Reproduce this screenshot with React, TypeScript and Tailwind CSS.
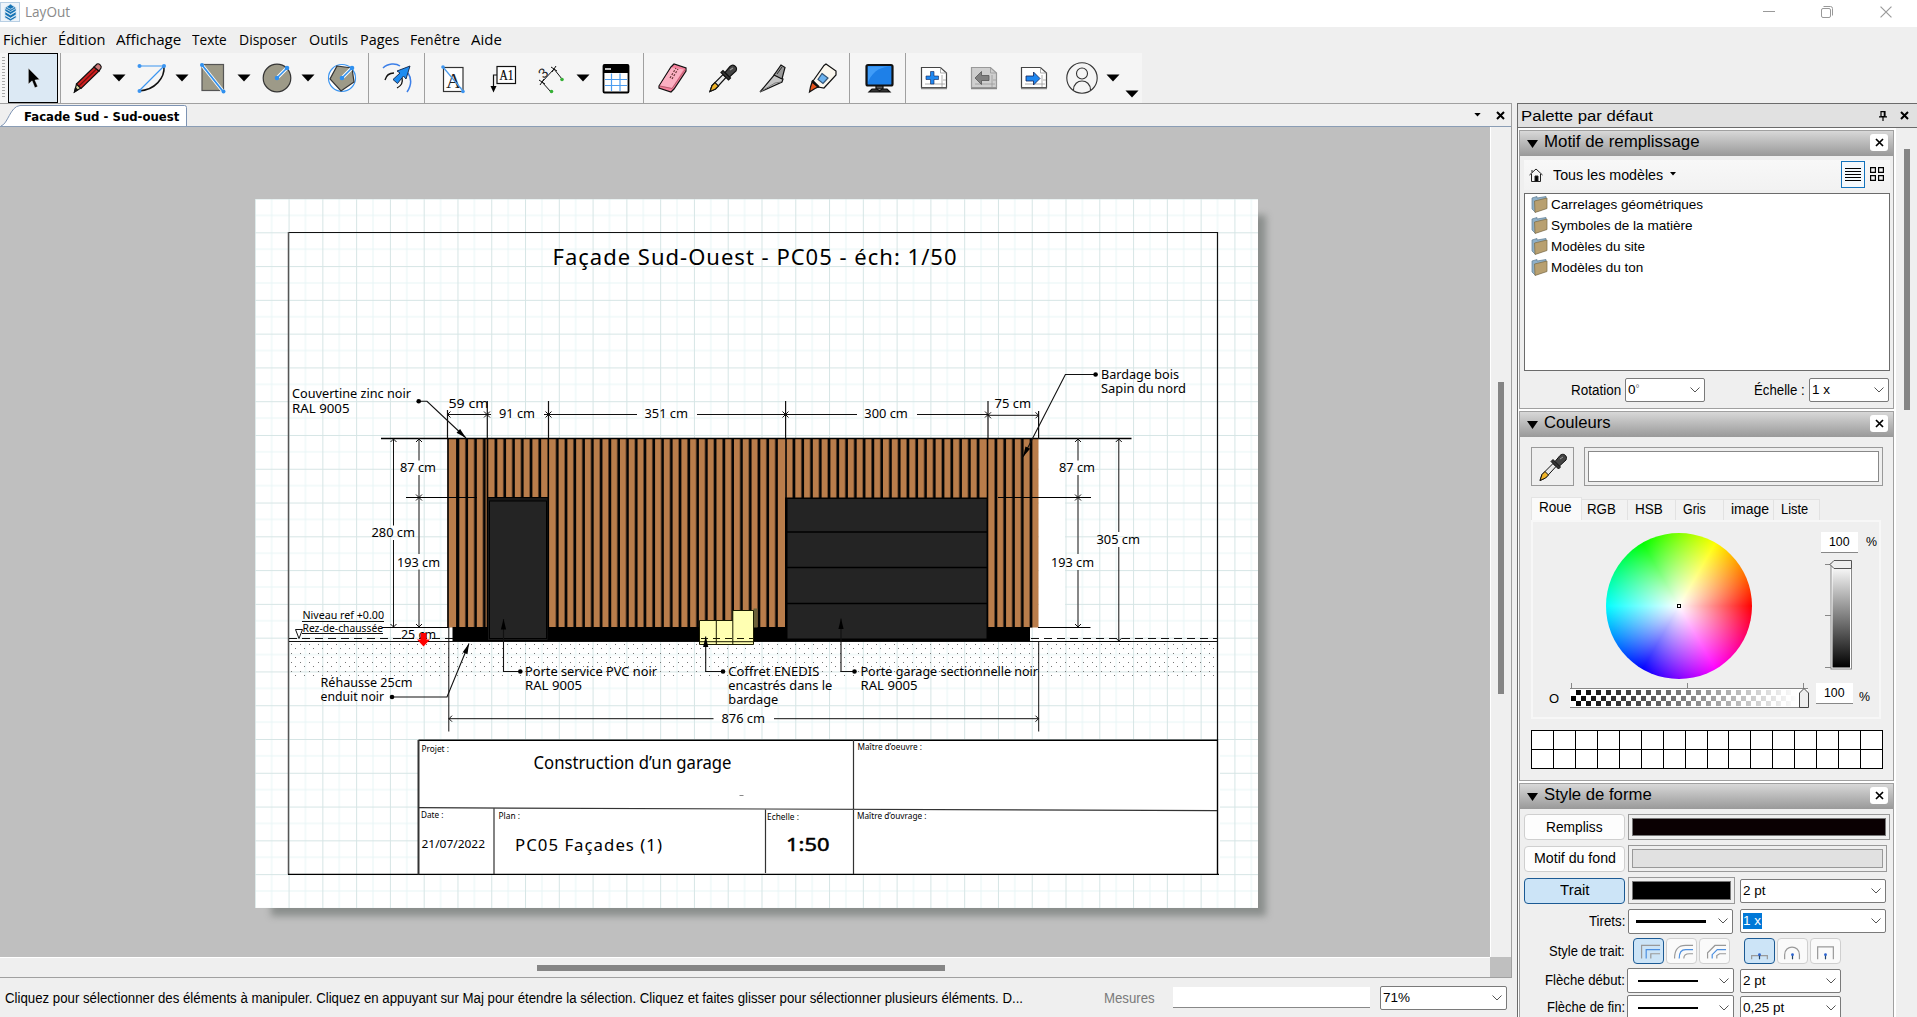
import { useLayoutEffect, useRef, useState } from "react";
import type { ReactNode } from "react";

/* Single line of text stretched to a given width. */
function Fit({ w, children, className = "" }: { w: number; children: ReactNode; className?: string }) {
  const ref = useRef<HTMLSpanElement>(null);
  const [k, setK] = useState(1);
  useLayoutEffect(() => {
    if (ref.current) setK(w / ref.current.offsetWidth);
  }, [w]);
  return (
    <span className={"block shrink-0 whitespace-nowrap " + className} style={{ width: w }}>
      <span ref={ref} className="inline-block origin-left" style={{ transform: `scaleX(${k})` }}>
        {children}
      </span>
    </span>
  );
}

const UI = "font-['Liberation_Sans',Arial,sans-serif]";

/* ---------- toolbar icons ---------- */

function Icon({ className = "", children }: { className?: string; children: ReactNode }) {
  return (
    <svg viewBox="0 0 34 34" className={"h-[34px] w-[34px] shrink-0 " + className} fill="none" stroke="#111" strokeWidth="1.2">
      {children}
    </svg>
  );
}

function Tri({ className = "" }: { className?: string }) {
  return (
    <svg viewBox="0 0 14 8" className={"h-[8px] w-[14px] shrink-0 " + className}>
      <path d="M0.5 0.5h13L7 7.5z" fill="#000" />
    </svg>
  );
}

const Sep = ({ className = "" }: { className?: string }) => <div className={"h-full w-px shrink-0 bg-[#a0a0a0] " + className} />;

function DropperShape() {
  return (
    <>
      <path d="M4 30.500l2-6L17 13.500l3 3L9.500 28z" fill="#e8e8e8" />
      <path d="M4 30.500l2-6 3-3 3.500 3.500-3 3z" fill="#f0b429" />
      <path d="M15 11.500l2-2 7.500 7.500-2 2z" fill="#333" />
      <path d="M19 11.500l5-6c3-3 8 0 6 4.500L23.500 16z" fill="#444" />
      <path d="M24 9l3-2" stroke="#999" />
    </>
  );
}

function PageShape({ off = false }: { off?: boolean }) {
  return (
    <>
      <path d="M4.500 6.500h19l6 5.500v14.500h-25z" fill={off ? "#cfcfcf" : "#fff"} stroke={off ? "#999" : "#444"} />
      <path d="M23.500 6.500v5.500h6M25 14v12M8 23h20M26 19h3" stroke="#999" strokeWidth="0.8" />
      <path d="M4 27.500h26" stroke="#888" strokeWidth="1.5" />
    </>
  );
}

function Toolbar() {
  return (
    <div className="flex h-[50px] shrink-0 bg-[#efefef]">
      <div className="flex h-full w-[1142px] items-center bg-[#f5f5f5]">
        <div className="ml-[2px] h-[42px] w-[3px] bg-[repeating-linear-gradient(180deg,#aaa_0,#aaa_1px,transparent_1px,transparent_3px)]" />
        <div className="ml-[3px] flex h-[50px] w-[50px] shrink-0 items-center justify-center border border-black bg-[#dce9f4]">
          <svg viewBox="0 0 14 24" className="h-[23px] w-[13px]">
            <path d="M1.500 1v17l4-3.500 3 7.500 3-1.300-3-7 5-.7z" fill="#000" stroke="#fff" strokeWidth="0.4" />
          </svg>
        </div>
        <Sep className="ml-[2px]" />
        <Icon className="ml-[10px]">
          <path d="M3.500 31l2-8 4.500 4z" fill="#d8d8a0" />
          <path d="M5.500 23L23 6l5 4L10 27.500z" fill="#d22020" />
          <path d="M8 25L25.500 8" stroke="#701010" />
          <path d="M23 6l3-3c2-1 5 2 4 4l-2 3z" fill="#c77" />
          <path d="M3.500 31l1-4 2 2z" fill="#000" />
        </Icon>
        <Tri className="ml-[7px]" />
        <Icon className="ml-[9px]">
          <path d="M29 5c1 12-9 24-25 25" stroke="#111" strokeWidth="1.5" />
          <path d="M4 5h25L4 30" stroke="#3c95f0" />
          <g fill="#3c95f0" stroke="none"><circle cx="4.500" cy="5" r="2" /><circle cx="29" cy="5" r="2" /><circle cx="4.500" cy="30" r="2" /></g>
        </Icon>
        <Tri className="ml-[6px]" />
        <Icon className="ml-[7px]">
          <rect x="6" y="3.500" width="21.500" height="26" fill="#9d9a88" stroke="#555" />
          <path d="M6 4l21.500 27" stroke="#fff" strokeWidth="3.500" />
          <path d="M6 4l21.500 27" stroke="#3090ee" strokeWidth="1.800" />
          <g fill="#3090ee" stroke="none"><circle cx="6" cy="4" r="2" /><circle cx="27.500" cy="30.500" r="2" /></g>
        </Icon>
        <Tri className="ml-[7px]" />
        <Icon className="ml-[9px]">
          <circle cx="17" cy="17" r="13.800" fill="#9d9a88" stroke="#333" />
          <path d="M17 17L27 7" stroke="#fff" strokeWidth="3.500" />
          <path d="M17 17L27 7" stroke="#3090ee" strokeWidth="1.600" />
          <g fill="#3090ee" stroke="none"><circle cx="17" cy="17" r="2.300" /><circle cx="27" cy="7" r="2.300" /></g>
        </Icon>
        <Tri className="ml-[7px]" />
        <Icon className="ml-[10px]">
          <circle cx="17" cy="17" r="13.500" fill="#fff" stroke="#3c95f0" />
          <path d="M12 5l15 2 2 14-13 9L5 18z" fill="#9d9a88" stroke="#333" />
          <path d="M17 17L27 7" stroke="#fff" strokeWidth="3.500" />
          <path d="M17 17L27 7" stroke="#3090ee" strokeWidth="1.600" />
          <g fill="#3090ee" stroke="none"><circle cx="17" cy="17" r="2.300" /><circle cx="27" cy="7" r="2.300" /></g>
        </Icon>
        <Sep className="ml-[9px]" />
        <Icon className="ml-[11px]">
          <path d="M3 7C8 2 16 2 20 5M28 12c4 6 3 13-1 19" stroke="#3c7fe8" strokeWidth="1.500" />
          <path d="M5 19c1-4 4-7 9-7M22 17c1 4-1 8-5 10" strokeWidth="1.300" />
          <path d="M13 18.500L20 12l-3-2 13-5-4 13-2.500-3-6 7.500z" fill="#1e8cf0" stroke="#124" strokeWidth="0.900" />
        </Icon>
        <Sep className="ml-[10px]" />
        <Icon className="ml-[11px]">
          <rect x="7.500" y="6.500" width="19.500" height="24" fill="#fff" stroke="#333" />
          <text x="17.500" y="27" textAnchor="middle" fontFamily="Liberation Serif, serif" fontSize="21" fill="#222" stroke="none">A</text>
          <path d="M7 6l20 24" stroke="#4c9df0" />
          <g fill="#3c95f0" stroke="none"><circle cx="7" cy="6" r="1.800" /><circle cx="27" cy="30.500" r="1.800" /></g>
        </Icon>
        <Icon className="ml-[17px]">
          <rect x="10" y="5.500" width="18.500" height="17" fill="#fff" />
          <text x="12.500" y="18.500" fontFamily="Liberation Serif, serif" fontSize="14.500" fill="#000" stroke="#000" strokeWidth="0.200" textLength="14" lengthAdjust="spacingAndGlyphs">A1</text>
          <path d="M10 14H6.500v12" />
          <path d="M3.500 25h6l-3 6.500z" fill="#000" stroke="none" />
        </Icon>
        <Icon className="ml-[13px]">
          <path d="M20 8L8 21M20 8l8 10M8 21l9 10M17 6l6 4M22 5l-4 6M5 19l6 4M10 18l-4 6" strokeWidth="1" />
          <text x="9" y="17" textAnchor="middle" fontFamily="Liberation Sans, sans-serif" fontSize="14" fill="#222" stroke="none" transform="rotate(-42 9 12)">3</text>
          <g fill="#35b035" stroke="none"><circle cx="28" cy="18.500" r="1.800" /><circle cx="17.500" cy="30.500" r="1.800" /></g>
        </Icon>
        <Tri className="ml-[8px]" />
        <Icon className="ml-[9px]">
          <rect x="4.500" y="4" width="25" height="27.500" rx="1" fill="#fff" stroke="#000" strokeWidth="1.800" />
          <path d="M4 4h26v8H4z" fill="#000" stroke="none" />
          <path d="M6 8h6" stroke="#fff" strokeWidth="1.500" />
          <path d="M12.500 12.500V30M21 12.500V30M6 18.500h22M6 24.500h22" stroke="#4c9df0" />
        </Icon>
        <Sep className="ml-[10px]" />
        <Icon className="ml-[12px]">
          <path d="M3 25L15 6l3-3 12 4v3L18 28l-3 3-12-4z" fill="#f47f9a" />
          <path d="M4 24.500L15.500 6.500l12 2L16 27z" fill="#fbb0c2" stroke="none" />
          <path d="M3.500 25l12.500 2.500L29.500 8" stroke="#b05a6c" strokeWidth="0.900" />
          <path d="M14 17l6-10M16 18l6-10" stroke="#633" strokeDasharray="2 1.500" />
        </Icon>
        <Icon className="ml-[16px]"><DropperShape /></Icon>
        <Icon className="ml-[16px]">
          <path d="M4 31L19 13l6 4 2 1-1 3z" fill="#c4c4c4" />
          <path d="M4 31l15-9 6-1" stroke="#777" strokeWidth="0.900" />
          <path d="M18 14L25 4l4 2.500L26 18z" fill="#999" />
          <path d="M21 13l5-7" strokeWidth="0.800" />
        </Icon>
        <Icon className="ml-[16px]">
          <path d="M7 20L18 4.500l2-1.500 10 7v4L18 27l-6-1z" fill="#fbf7ee" />
          <path d="M16 12.500l6 4.500-5 5.500-5-4z" fill="#6cb2ee" stroke="#357" />
          <path d="M6 21l6 5-3 1.500L3.500 31l1-5z" fill="#e8551c" />
          <path d="M6 19.500l7 6.500" strokeWidth="1.800" />
        </Icon>
        <Sep className="ml-[9px]" />
        <Icon className="ml-[12px]">
          <rect x="4.500" y="4" width="26" height="20.500" rx="1.500" fill="#1e80e8" stroke="#111" strokeWidth="2.200" />
          <path d="M6 21C12 8 20 6 29 5.500H6z" fill="#3f9cf8" stroke="none" />
          <path d="M14 25h7v3h-7z" fill="#555" />
          <path d="M7 31l3-3h5l2.500 2L20 28h5l3 3z" fill="#333" />
        </Icon>
        <Sep className="ml-[9px]" />
        <Icon className="ml-[11px]"><PageShape /><path d="M13.500 10.500H17V15h4.500v3.500H17v4.500h-3.500v-4.500H9V15h4.500z" fill="#2088f0" stroke="#125" strokeWidth="0.600" /></Icon>
        <Icon className="ml-[16px]"><PageShape off /><path d="M8 17l6.500-6.500v4H22v5h-7.500v4z" fill="#808080" stroke="#555" strokeWidth="0.800" /></Icon>
        <Icon className="ml-[16px]"><PageShape /><path d="M23 17.500L16.500 11v4H9v5h7.500v4z" fill="#2088f0" stroke="#125" strokeWidth="0.800" /></Icon>
        <Icon className="ml-[14px]">
          <g stroke="#333" strokeWidth="1.100"><circle cx="17" cy="17" r="15.200" /><circle cx="17" cy="12.500" r="5.500" /><path d="M8.500 29c0-12 17-12 17 0" /></g>
        </Icon>
        <Tri className="ml-[7px]" />
        <Tri className="mb-[5px] ml-[5px] self-end" />
      </div>
    </div>
  );
}

/* ---------- sheet drawing ---------- */

const BLACK = "#111";
const LABEL_FONT = "Noto Sans, Open Sans, sans-serif";

interface TProps {
  x: number;
  y: number;
  w: number;
  s?: number;
  bold?: boolean;
  spread?: boolean;
  children: string;
}

function T({ x, y, w, s = 12.6, bold = false, spread = false, children }: TProps) {
  return (
    <text
      x={x}
      y={y}
      fontSize={s}
      fontFamily={LABEL_FONT}
      textLength={w}
      lengthAdjust={spread ? "spacing" : "spacingAndGlyphs"}
      fill="#000"
      stroke={bold ? "#000" : "none"}
      strokeWidth="0.5"
    >
      {children}
    </text>
  );
}

function Slats({ x0, x1, y1, first }: { x0: number; x1: number; y1: number; first: number }) {
  const xs: number[] = [];
  for (let x = first; x < x1 - 1; x += 8.77) xs.push(x);
  return (
    <g stroke="none">
      <rect x={x0} y="438.500" width={x1 - x0} height={y1 - 438.5} fill="#b97d4b" />
      {xs.map((x) => (
        <g key={x}>
          <rect x={x - 1.9} y="438.500" width="1" height={y1 - 438.5} fill="#6d4a30" />
          <rect x={x - 1.1} y="438.500" width="2.400" height={y1 - 438.5} fill="#050505" />
        </g>
      ))}
    </g>
  );
}

/* Dimension tick: a small pair of strokes pointing at a line end. */
const tickH = (x: number, y: number, d: number) => `M${x + 3 * d} ${y - 3}L${x} ${y}L${x + 3 * d} ${y + 3}`;
const tickV = (x: number, y: number, d: number) => `M${x - 3} ${y + 3 * d}L${x} ${y}L${x + 3} ${y + 3 * d}`;

function Leader({ pts, dot, ang }: { pts: [number, number][]; dot: [number, number]; ang: number }) {
  const [tx, ty] = pts[0];
  return (
    <g>
      <polyline points={pts.map((p) => p.join(",")).join(" ")} fill="none" strokeWidth="1.1" />
      <circle cx={dot[0]} cy={dot[1]} r="2.300" fill="#000" stroke="none" />
      <path d="M0 0L-2.600 10.500H2.600z" transform={`translate(${tx} ${ty}) rotate(${ang})`} fill="#000" stroke="none" />
    </g>
  );
}

function Sheet() {
  return (
    <svg viewBox="255 199 1003 709" className="block h-[709px] w-[1003px]" stroke={BLACK} fill="none">
      <defs>
        <pattern id="grid" x="288.570" y="232.300" width="33.780" height="33.780" patternUnits="userSpaceOnUse">
          <path d="M0 16.890H33.780M16.890 0V33.780" stroke="#e8f5f6" strokeWidth="1" />
          <path d="M0 0H33.780M0 0V33.780" stroke="#d6e5e5" strokeWidth="2" />
        </pattern>
        <pattern id="soil" x="290" y="643" width="9" height="9" patternUnits="userSpaceOnUse" stroke="none">
          <rect x="1" y="1" width="1" height="1" fill="#777" />
          <rect x="5" y="5" width="1" height="1" fill="#777" />
        </pattern>
      </defs>
      <rect x="255" y="199" width="1003" height="709" fill="url(#grid)" stroke="none" />
      <rect x="1039" y="439.500" width="26" height="202" fill="#fff" stroke="none" />
      <rect x="289" y="643" width="928" height="33" fill="url(#soil)" stroke="none" />
      <path d="M289 232.500H1217.500V874" strokeWidth="1.200" />
      <path d="M288.500 232V874.500" stroke="#555" strokeWidth="1.500" />
      <T x={552.500} y={265} w={404} s={22} spread>Façade Sud-Ouest - PC05 - éch: 1/50</T>

      <Slats x0={447.5} x1={487.5} y1={627.5} first={458} />
      <Slats x0={487.5} x1={548.5} y1={498} first={496} />
      <Slats x0={548.5} x1={785.5} y1={627.5} first={557.3} />
      <Slats x0={785.5} x1={987.5} y1={498} first={794} />
      <Slats x0={987.5} x1={1038.5} y1={627.5} first={996} />
      <path d="M448 438V628M487.500 438V628M548.300 438V628M786 438V500M987.500 438V628" stroke="#000" strokeWidth="1.600" />
      <path d="M456.500 438V627" stroke="#000" strokeWidth="0.800" />
      <path d="M381 438.500H1131.500" stroke="#000" strokeWidth="1.300" />
      <rect x="452.500" y="627" width="577.500" height="15" fill="#000" stroke="none" />
      <rect x="487.500" y="497.500" width="60.500" height="143" fill="#181818" stroke="#000" />
      <rect x="489.500" y="501" width="57" height="137.500" fill="#242424" stroke="#000" />
      <rect x="785" y="497.500" width="203" height="141" fill="#000" stroke="none" />
      <rect x="787.500" y="499" width="199" height="139.500" fill="#242424" stroke="none" />
      <path d="M787 532H987M787 567.500H987M787 603.500H987" stroke="#000" strokeWidth="1.300" />

      <path d="M289 641.500H1217.500" strokeWidth="1.200" />
      <path d="M289 638.500H453M1031 638.500H1217.500" strokeDasharray="8 5" />
      <rect x="753.500" y="608.500" width="4" height="19" fill="#6b6039" stroke="none" />
      <path d="M699.500 620.500h33.300v-10H753.500v34h-54z" fill="#ffffb2" stroke="#1a1a00" />
      <path d="M716.300 620.500v24M732.800 620.500v24M699.500 641.700h54" stroke="#1a1a00" />
      <path d="M701 638.500h52" strokeDasharray="7 5" stroke="#1a1a00" />

      <g strokeWidth="1.200">
        <path d="M447.500 410v28M487.300 401v37M548.500 401v37M785.600 401v37M988 401v37M1038.600 411v28" />
        <path d="M447.500 414.500H491M544 414.500H637M697 414.500H857M917 414.500H988" strokeWidth="1" />
        <path d="M988 415.300h50.600" strokeWidth="1" />
        <path d={tickH(447.5, 414.500, 1) + tickH(487, 414.500, -1) + tickH(487, 414.500, 1) + tickH(548.5, 414.500, -1) + tickH(548.5, 414.500, 1) + tickH(785.5, 414.500, -1) + tickH(785.5, 414.500, 1) + tickH(988, 414.500, -1) + tickH(988, 415.300, 1) + tickH(1038.5, 415.300, -1)} strokeWidth="1" />
      </g>
      <T x={448.500} y={408} w={40}>59 cm</T>
      <T x={499} y={418} w={36}>91 cm</T>
      <T x={644.500} y={418} w={43.500}>351 cm</T>
      <T x={864.300} y={418} w={43.500}>300 cm</T>
      <T x={994.500} y={408} w={36.500}>75 cm</T>

      <path d="M393.500 438.500V525.500M393.500 540V627M1118.800 438.500V532M1118.800 547V641" />
      <path d="M419 438.500V460.500M419 475V554M419 569.500V627M1078 438.500V460.500M1078 475V554M1078 570V627" stroke="#555" strokeWidth="1.400" />
      <path d="M406 497.500H477M998 497.500H1091M382 627.500H448M1038 627.500H1090.500M1065 641.500h66" stroke="#000" />
      <path d={tickV(393.5, 439, 1) + tickV(393.5, 627, -1) + tickV(419, 439, 1) + tickV(419, 497.500, -1) + tickV(419, 497.500, 1) + tickV(419, 627, -1) + tickV(1078, 439, 1) + tickV(1078, 497.500, -1) + tickV(1078, 497.500, 1) + tickV(1078, 627, -1) + tickV(1118.8, 439, 1) + tickV(1118.8, 641, -1)} />
      <T x={400} y={472} w={36}>87 cm</T>
      <T x={371.500} y={537} w={43.500}>280 cm</T>
      <T x={397} y={567} w={43}>193 cm</T>
      <T x={401} y={638.700} w={35}>25 cm</T>
      <T x={1059} y={472} w={36}>87 cm</T>
      <T x={1051} y={567} w={43}>193 cm</T>
      <T x={1096.500} y={543.700} w={43.500}>305 cm</T>
      <path d="M420.500 633h6v6.500h3.500l-6.500 7-6.500-7h3.500z" fill="#f00" stroke="none" />

      <T x={302.500} y={619.300} w={81.500} s={10.500}>Niveau ref +0.00</T>
      <T x={302.500} y={631.500} w={80.500} s={10.500}>Rez-de-chaussée</T>
      <path d="M302 621.500h82M302 633.500h81" strokeWidth="1" />
      <path d="M295.500 629.500h7l-3.500 9z" />

      <T x={292} y={398.300} w={119}>Couvertine zinc noir</T>
      <T x={292} y={413} w={57.500}>RAL 9005</T>
      <Leader pts={[[466, 438], [427, 401.300], [419, 401.300]]} dot={[418.7, 401.300]} ang={133} />
      <T x={1101} y={379} w={78}>Bardage bois</T>
      <T x={1101} y={393} w={85}>Sapin du nord</T>
      <Leader pts={[[1023, 457], [1065.4, 374.500], [1095, 374.500]]} dot={[1095.6, 374.500]} ang={207} />
      <T x={525} y={675.700} w={132}>Porte service PVC noir</T>
      <T x={525} y={689.700} w={57}>RAL 9005</T>
      <Leader pts={[[503.5, 619], [503.5, 671.500], [520, 671.500]]} dot={[520.3, 671.500]} ang={0} />
      <T x={728.300} y={675.700} w={91}>Coffret ENEDIS</T>
      <T x={728.300} y={689.700} w={104}>encastrés dans le</T>
      <T x={728.300} y={703.500} w={50}>bardage</T>
      <Leader pts={[[705.7, 636.500], [705.7, 671.500], [723, 671.500]]} dot={[723, 671.500]} ang={0} />
      <T x={860.500} y={675.700} w={177.500}>Porte garage sectionnelle noir</T>
      <T x={860.500} y={689.700} w={57}>RAL 9005</T>
      <Leader pts={[[841, 618.500], [841, 671.500], [854, 671.500]]} dot={[854.5, 671.500]} ang={0} />
      <T x={320.500} y={686.700} w={92}>Réhausse 25cm</T>
      <T x={320.500} y={700.700} w={63.500}>enduit noir</T>
      <Leader pts={[[469, 643.500], [447, 697], [392, 697]]} dot={[392, 697]} ang={22} />

      <path d="M448.800 627V731.500M1038.700 641.700V731.500M448.800 718.700H713.500M774 718.700H1038.700" />
      <path d={tickH(449, 718.700, 1) + tickH(1038.5, 718.700, -1)} />
      <T x={721.500} y={723} w={43.500}>876 cm</T>

      <rect x="418" y="740" width="802" height="134.500" fill="#fff" stroke="none" />
      <path d="M418.500 740.300H1217.500V874.400M288 874.400H1219" stroke="#000" strokeWidth="1.400" />
      <path d="M418.500 740V874.500" stroke="#333" strokeWidth="2" />
      <path d="M418 807.700L1217 810.700M853.500 740V874M494 808V874M765.500 809V873" stroke="#333" strokeWidth="1.200" />
      <path d="M739.500 795.500h4" stroke="#888" />
      <T x={421.500} y={751.500} w={27.500} s={8.800}>Projet :</T>
      <T x={533.500} y={769.300} w={198} s={18}>Construction d’un garage</T>
      <T x={857.500} y={750} w={64.500} s={8.800}>Maître d’oeuvre :</T>
      <T x={421} y={818} w={22.500} s={8.800}>Date :</T>
      <T x={498.500} y={818.500} w={21.500} s={8.800}>Plan :</T>
      <T x={767} y={819.500} w={32} s={8.800}>Echelle :</T>
      <T x={857} y={819} w={69.500} s={8.800}>Maître d’ouvrage :</T>
      <T x={421.500} y={848.300} w={63.500} s={11.300}>21/07/2022</T>
      <T x={515} y={851} w={147} s={16.800} spread>PC05 Façades (1)</T>
      <T x={786} y={851} w={43.500} s={18.500} bold>1:50</T>
    </svg>
  );
}

/* ---------- palette widgets ---------- */

function Cross({ className = "h-[9px] w-[9px]", c = "#000", s = 2 }: { className?: string; c?: string; s?: number }) {
  return (
    <svg viewBox="0 0 9 9" className={"shrink-0 " + className}>
      <path d="M1 1l7 7M8 1l-7 7" stroke={c} strokeWidth={s} />
    </svg>
  );
}

function Chevron() {
  return (
    <svg viewBox="0 0 10 6" className="mr-[4px] ml-auto h-[6px] w-[10px] shrink-0" fill="none" stroke="#555">
      <path d="M0.500 0.500L5 5l4.500-4.500" />
    </svg>
  );
}

function Combo({ className, children }: { className: string; children?: ReactNode }) {
  return <div className={"flex shrink-0 items-center rounded-[2px] border border-[#7a7a7a] bg-white pl-[2px] text-[13.500px] leading-none " + className}>{children}<Chevron /></div>;
}

function Section({ title, w, className, children }: { title: string; w: number; className: string; children: ReactNode }) {
  return (
    <section className={"flex shrink-0 flex-col border border-[#a0a0a0] bg-[#efefef] " + className}>
      <header className="flex h-[25px] shrink-0 items-center bg-linear-to-b from-[#d8d8d8] to-[#999] pr-[5px] pl-[7px]">
        <svg viewBox="0 0 11 8" className="mt-[1px] h-[8px] w-[11px]"><path d="M0 0h11L5.500 8z" /></svg>
        <Fit w={w} className="mt-[-3px] ml-[6px] text-[16px] leading-[20px]">{title}</Fit>
        <span className="mt-[-3px] ml-auto flex h-[17px] w-[18px] items-center justify-center rounded-[3px] bg-white"><Cross s={1.7} /></span>
      </header>
      {children}
    </section>
  );
}

function Folder() {
  return (
    <svg viewBox="0 0 17 17" className="h-[17px] w-[17px] shrink-0">
      <path d="M1 2l5-1.500V2l9-1.500V12L4 16 1 13z" fill="#8fb0c8" stroke="#5f7d92" strokeWidth="0.700" />
      <path d="M3.500 5L16 2v10.500L4 16.500z" fill="#b8a070" stroke="#7a6a45" strokeWidth="0.700" />
    </svg>
  );
}

const strokeButtons: ReactNode[] = [
  <path key="a" d="M8 21V7h20M18 21v-5h10" stroke="#999" />,
  <path key="b" d="M8 21c0-9 3-14 12-14h8M18 21c0-4 2-5 6-5h4" stroke="#999" />,
  <path key="c" d="M8 21v-6l8-8h12M18 21v-3l3-2h7" stroke="#999" />,
];
const strokeMid = ["M13 21v-9.500h15", "M13 21c0-6 2-9.500 7-9.500h8", "M13 21v-4l5.500-5.500H28"];
const capButtons: ReactNode[] = [
  <path key="a" d="M7 22v-4h17v4" stroke="#999" />,
  <path key="b" d="M7 22v-5c0-11 16-11 16 0v5" stroke="#999" />,
  <path key="c" d="M7 22V8.500h17V22" stroke="#999" />,
];

function StyleButton({ on, children }: { on: boolean; children: ReactNode }) {
  return (
    <div className={on ? "h-[26px] w-[31px] rounded-[4px] border border-[#1b5a94] bg-[#cce4f7]" : "h-[26px] w-[31px] rounded-[4px] border border-[#cfcfcf] bg-[#fafafa]"}>
      <svg viewBox="0 0 31 26" className="h-[24px] w-[29px]" fill="none" strokeWidth="1.300">{children}</svg>
    </div>
  );
}

function PushButton({ children, on = false, w }: { children: string; on?: boolean; w: number }) {
  return (
    <div className={"flex h-[26px] w-[101px] shrink-0 items-center justify-center rounded-[4px] border text-[14px] " + (on ? "border-[#1b5a94] bg-[#cce4f7]" : "border-[#cfcfcf] bg-[#fdfdfd]")}>
      <Fit w={w}>{children}</Fit>
    </div>
  );
}

function PercentBox({ className = "" }: { className?: string }) {
  return <span className={"flex h-[21px] w-[37px] shrink-0 items-center justify-center border-b border-[#888] bg-white text-[13.500px] " + className}><Fit w={21}>100</Fit></span>;
}

function FillPanel() {
  const items: [string, number][] = [["Carrelages géométriques", 152.5], ["Symboles de la matière", 141.5], ["Modèles du site", 94.500], ["Modèles du ton", 92]];
  return (
    <Section title="Motif de remplissage" w={156} className="h-[279px]">
      <div className="mt-[4px] ml-[4px] flex h-[30px] w-[366px] items-center bg-linear-to-b from-[#f8f8f8] to-[#f2f2f2]">
        <svg viewBox="0 0 14 14" className="ml-[5px] h-[14px] w-[14px]" fill="none" stroke="#222">
          <path d="M0.500 7L7 1l6.500 6M2.500 6v7.500h9V6M3 2v2.500" fill="none" /><path d="M6 8h3v5.500H6z" fill="#000" />
        </svg>
        <Fit w={110} className="ml-[10px] text-[14px]">Tous les modèles</Fit>
        <svg viewBox="0 0 6 4" className="mt-[-2px] ml-[7px] h-[4px] w-[6px]"><path d="M0 0h6L3 3.500z" /></svg>
        <span className="mt-[-2px] ml-auto flex h-[27px] w-[24px] items-center justify-center border border-[#1373bd] bg-[#f4f9fd]">
          <svg viewBox="0 0 16 14" className="h-[14px] w-[16px]" stroke="#000"><path d="M0 1.500h16M0 4.500h16M0 7.500h16M0 10.500h16M0 13.500h16" /></svg>
        </span>
        <svg viewBox="0 0 14 14" className="mt-[-2px] mr-[6px] ml-[5px] h-[14px] w-[14px]" fill="none" stroke="#000" strokeWidth="1.200">
          <path d="M0.600 0.600h4.800v4.800H.6zM8.600.6h4.800v4.800H8.600zM.6 8.600h4.800v4.800H.6zM8.600 8.600h4.800v4.800H8.600z" />
        </svg>
      </div>
      <div className="mt-[3px] ml-[4px] h-[178px] w-[366px] border border-[#6b6b6b] bg-white pl-[6px]">
        {items.map(([t, w]) => (
          <div key={t} className="flex h-[21px] items-center gap-[3px]">
            <Folder />
            <Fit w={w} className="pt-px text-[13.500px]">{t}</Fit>
          </div>
        ))}
      </div>
      <div className="mt-[7px] flex items-center">
        <Fit w={50} className="ml-[51px] text-[14px]">Rotation</Fit>
        <Combo className="ml-[4px] h-[24px] w-[80px]">0<span className="mb-[3px] text-[10px] text-[#777]">°</span></Combo>
        <Fit w={51} className="ml-[49px] text-[14px]">Échelle :</Fit>
        <Combo className="ml-[4px] h-[24px] w-[80px]">1 x</Combo>
      </div>
    </Section>
  );
}

function ColorPanel() {
  const tabs: [string, number, string][] = [
    ["RGB", 28.5, "w-[46px] pl-[5px]"], ["HSB", 28, "w-[48px] pl-[7px]"], ["Gris", 23, "w-[48px] pl-[7px]"], ["image", 38, "w-[50px] pl-[7px]"], ["Liste", 27.5, "w-[46px] pl-[7px]"],
  ];
  return (
    <Section title="Couleurs" w={66.500} className="mt-[2px] h-[370px]">
      <div className="mt-[10px] ml-[11px] flex">
        <span className="flex h-[39px] w-[43px] items-center justify-center border border-[#999]">
          <svg viewBox="0 0 34 34" className="h-[34px] w-[34px]" stroke="#111" fill="none"><DropperShape /></svg>
        </span>
        <span className="ml-[10px] h-[39px] w-[299px] border border-[#999] p-[3px]"><span className="block h-full border border-[#888] bg-white" /></span>
      </div>
      <div className="mt-[11px] ml-[11px] flex h-[23px] items-end text-[14px] leading-[18px]">
        <div className="h-[23px] w-[51px] border border-b-0 border-[#e4e4e4] bg-[#fafafa] pl-[7px]"><Fit w={32}>Roue</Fit></div>
        {tabs.map(([t, w, c]) => (
          <div key={t} className={"h-[21px] shrink-0 border-t border-r border-[#e2e2e2] bg-[#f2f2f2] " + c}><Fit w={w}>{t}</Fit></div>
        ))}
      </div>
      <div className="ml-[11px] h-[199px] w-[350px] border-2 border-[#f7f7f7]">
        <div className="flex h-[149px]">
          <div className="mt-[11px] ml-[73px] flex h-[146px] w-[146px] items-center justify-center rounded-full bg-[radial-gradient(circle_closest-side,#fff,rgba(255,255,255,0)),conic-gradient(from_90deg,#f00,#f0f,#00f,#0ff,#0f0,#ff0,#f00)]">
            <span className="h-[4px] w-[4px] border border-black bg-white" />
          </div>
          <div className="mt-[10px] ml-[69px]">
            <div className="flex items-center"><PercentBox /><Fit w={11} className="ml-[8px] text-[13.500px]">%</Fit></div>
            <svg viewBox="0 0 28 112" className="mt-[5px] ml-[4px] h-[112px] w-[28px]" fill="none" stroke="#888">
              <defs><linearGradient id="val" x1="0" y1="0" x2="0" y2="1"><stop offset="0" stopColor="#fff" /><stop offset="1" stopColor="#000" /></linearGradient></defs>
              <path d="M0 6.500h6M0 57.500h6M0 109.500h6" />
              <rect x="6" y="5.500" width="20.500" height="105.500" fill="#fff" />
              <rect x="7.500" y="7" width="17.500" height="102.500" fill="url(#val)" stroke="none" />
              <path d="M5 6.500L9 2.500h17.500v8H9z" fill="#efefef" stroke="#555" />
            </svg>
          </div>
        </div>
        <div className="mt-[12px] flex items-start">
          <span className="mt-[7px] ml-[16px] w-[21px] text-[13px] leading-[18px]">O</span>
          <div className="relative w-[238px]">
            <div className="flex h-[5px] justify-between pr-[4px] pl-[1px]"><i className="w-px bg-[#888]" /><i className="w-px bg-[#888]" /><i className="w-px bg-[#888]" /></div>
            <div className="h-[20px] border-y border-[#888] bg-white p-px">
              <div className="h-full bg-[linear-gradient(90deg,rgba(255,255,255,0),#fff_96%),repeating-conic-gradient(#000_0_25%,#fff_0_50%)] [background-size:100%_100%,10px_11px]" />
            </div>
            <svg viewBox="0 0 10 20" className="absolute top-[5px] right-[-1px] h-[20px] w-[10px]"><path d="M.5 19.500V5L5 .5 9.500 5v14.500z" fill="#efefef" stroke="#444" /></svg>
          </div>
          <PercentBox className="ml-[8px]" />
          <Fit w={11} className="mt-[4px] ml-[6px] text-[13.500px]">%</Fit>
        </div>
      </div>
      <div className="mt-[11px] ml-[11px] grid h-[39px] w-[352px] grid-cols-16 grid-rows-2 gap-px border border-black bg-black">
        {Array.from({ length: 32 }, (_, i) => <span key={i} className="bg-white" />)}
      </div>
    </Section>
  );
}

function Label({ w, children }: { w: number; children: string }) {
  return <div className="flex w-[105px] shrink-0 justify-end text-[14px]"><Fit w={w}>{children}</Fit></div>;
}

function StrokePanel() {
  return (
    <Section title="Style de forme" w={107.500} className="mt-[2px] h-[260px]">
      <div className="mt-[5px] ml-[4px] flex h-[26px] items-start gap-[3px]">
        <PushButton w={57}>Rempliss</PushButton>
        <div className="h-[26px] w-[262px] border border-[#999] p-[3px]"><div className="h-full border border-[#777] bg-[#0a0002]" /></div>
      </div>
      <div className="mt-[5px] ml-[4px] flex h-[27px] items-center gap-[3px]">
        <PushButton w={82}>Motif du fond</PushButton>
        <div className="h-[27px] w-[259px] border border-[#999] p-[3px]"><div className="h-full border border-[#999] bg-[#e1e1e1]" /></div>
      </div>
      <div className="mt-[5px] ml-[4px] flex h-[27px] items-center gap-[3px]">
        <PushButton on w={29}>Trait</PushButton>
        <div className="h-[27px] w-[107px] border border-[#999] p-[3px]"><div className="h-full border border-[#777] bg-black" /></div>
        <Combo className="ml-[2px] h-[24px] w-[146px]">2 pt</Combo>
      </div>
      <div className="mt-[4px] flex h-[26px] items-center">
        <Label w={36}>Tirets:</Label>
        <Combo className="ml-[3px] h-[25px] w-[105px]"><span className="ml-[5px] h-[3px] w-[70px] bg-black" /></Combo>
        <Combo className="ml-[7px] h-[24px] w-[146px]"><span className="bg-[#0078d7] py-px pr-px text-white">1 x</span></Combo>
      </div>
      <div className="mt-[4px] flex h-[26px] items-center">
        <Label w={76}>Style de trait:</Label>
        <div className="ml-[8px] flex gap-[2px]">
          {strokeButtons.map((b, i) => <StyleButton key={i} on={i === 0}>{b}<path d={strokeMid[i]} stroke="#4c8fe0" /></StyleButton>)}
        </div>
        <div className="ml-[14px] flex gap-[2px]">
          {capButtons.map((b, i) => <StyleButton key={i} on={i === 0}>{b}<path d="M15.500 22v-5" stroke="#246" /><circle cx="15.500" cy="17" r="1.500" fill="#2a62d0" /></StyleButton>)}
        </div>
      </div>
      <div className="mt-[4px] flex h-[25px] items-center">
        <Label w={80}>Flèche début:</Label>
        <Combo className="ml-[2px] h-[25px] w-[107px]"><span className="ml-[8px] h-[2px] w-[60px] bg-black" /></Combo>
        <Combo className="ml-[6px] h-[24px] w-[101px]">2 pt</Combo>
      </div>
      <div className="mt-[2px] flex h-[25px] items-center">
        <Label w={78}>Flèche de fin:</Label>
        <Combo className="ml-[2px] h-[25px] w-[107px]"><span className="ml-[8px] h-[2px] w-[60px] bg-black" /></Combo>
        <Combo className="ml-[6px] h-[24px] w-[101px]">0,25 pt</Combo>
      </div>
    </Section>
  );
}

/* ---------- window ---------- */

const menus: [string, number, string][] = [
  ["Fichier", 44, "ml-[3px]"], ["Édition", 47, "ml-[11px]"], ["Affichage", 65, "ml-[11px]"], ["Texte", 35, "ml-[11px]"], ["Disposer", 58, "ml-[12px]"],
  ["Outils", 39, "ml-[12px]"], ["Pages", 39, "ml-[12px]"], ["Fenêtre", 50, "ml-[11px]"], ["Aide", 31, "ml-[11px]"],
];

export default function App() {
  return (
    <div className={"flex h-[1017px] w-[1917px] flex-col overflow-hidden bg-[#efefef] text-black " + UI}>
      <div className="flex h-[27px] shrink-0 items-center bg-white">
        <span className="mt-[-3px] flex h-[20px] w-[20px] items-center justify-center border border-[#b8cfe4] bg-[#eef4fa]">
          <svg viewBox="0 0 16 18" className="h-[17px] w-[15px]" fill="#1673b5" stroke="#eef4fa" strokeWidth="0.800">
            <path d="M2 12l6 3.500 6-3.500v2.500L8 18l-6-3.500z" /><path d="M2 8l6 3.500L14 8v3.500L8 15l-6-3.500z" /><path d="M2 4l6-4 6 4v3.500L8 11 2 7.500z" /><path d="M2 4.500l6 3.500 6-3.500M4 3.500l4 2 4-2" fill="none" />
          </svg>
        </span>
        <Fit w={45.500} className="mt-[-4px] ml-[5px] font-['Open_Sans','Noto_Sans',sans-serif] text-[14px] text-[#8a8a8a]">LayOut</Fit>
        <div className="mt-[-4px] mr-[24px] ml-auto flex items-center">
          <span className="h-px w-[12px] bg-[#999]" />
          <svg viewBox="0 0 12 12" className="ml-[46px] h-[12px] w-[12px]" fill="none" stroke="#999"><rect x="0.500" y="2.500" width="9" height="9" rx="1.500" /><path d="M2.500.5h7q2 0 2 2v7" /></svg>
          <Cross className="ml-[46px] h-[14px] w-[14px]" c="#999" s={0.75} />
        </div>
      </div>
      <nav className="flex h-[26px] shrink-0 items-center pb-[2px] font-['Open_Sans','Noto_Sans',sans-serif] text-[14px]">
        {menus.map(([t, w, c]) => <Fit key={t} w={w} className={c}>{t}</Fit>)}
      </nav>
      <Toolbar />
      <div className="flex min-h-0 flex-1">
        <div className="flex w-[1512px] shrink-0 flex-col">
          <div className="flex h-[875px] shrink-0 flex-col border-t border-r border-b border-[#a0a0a0]">
            <div className="flex h-[23px] shrink-0 items-end border-b border-[#8a9db5] bg-[#efefef]">
              <div className="relative h-[22px] w-[188px] overflow-visible">
                <svg viewBox="0 0 188 22" className="absolute inset-0 h-[22px] w-[188px]"><path d="M1 22C8 20 10 2.500 20 1.500H184.500q2 0 2 2V22.500" fill="#fff" stroke="#7d93b3" /></svg>
                <Fit w={155} className="relative ml-[24px] pt-[4px] font-['DejaVu_Sans_Condensed','DejaVu_Sans',sans-serif] text-[12px] leading-[18px] font-bold">Facade Sud - Sud-ouest</Fit>
              </div>
              <svg viewBox="0 0 8 5" className="mb-[9px] ml-auto h-[4px] w-[7px]"><path d="M0 0h8L4 4.500z" /></svg>
              <Cross className="mr-[6px] mb-[6px] ml-[15px] h-[9px] w-[9px]" />
            </div>
            <div className="flex min-h-0 flex-1">
              <div className="w-[1490px] overflow-hidden bg-[#bfbfbf] pt-[72px] pl-[255px]">
                <div className="w-[1003px] bg-white shadow-[12px_12px_7px_-4px_#8b8f8d]"><Sheet /></div>
              </div>
              <div className="flex-1 border-l border-white bg-[#efefef] pt-[255px] pl-[7px]"><div className="h-[312px] w-[6px] bg-[#858585]" /></div>
            </div>
            <div className="flex h-[20px] shrink-0">
              <div className="w-[1490px] border-t border-white pt-[7px] pl-[537px]"><div className="h-[6px] w-[408px] bg-[#858585]" /></div>
              <div className="flex-1 bg-[#bfbfbf]" />
            </div>
          </div>
          <footer className="flex flex-1 items-center pt-[2px] text-[14px]">
            <Fit w={1018} className="ml-[5px]">Cliquez pour sélectionner des éléments à manipuler. Cliquez en appuyant sur Maj pour étendre la sélection. Cliquez et faites glisser pour sélectionner plusieurs éléments. D...</Fit>
            <Fit w={51} className="ml-[81px] text-[#7a7a7a]">Mesures</Fit>
            <div className="mt-[-3px] ml-[18px] h-[21px] w-[197px] border-b border-[#888] bg-white" />
            <Combo className="mt-[-1px] ml-[10px] h-[24px] w-[127px]">71%</Combo>
          </footer>
        </div>
        <aside className="ml-[5px] flex min-w-0 flex-1 flex-col border-t border-l border-[#6b6b6b]">
          <div className="flex h-[24px] shrink-0 items-center border-b border-[#6b6b6b] bg-[#e1e1e1]">
            <Fit w={131.500} className="ml-[3px] text-[15.500px]">Palette par défaut</Fit>
            <svg viewBox="0 0 8 10" className="mr-[13px] ml-auto h-[10px] w-[8px]" fill="none" stroke="#000" strokeWidth="1.200"><path d="M2 .6h4v5H2zM0 5.800h8M4 6v4M5.300 1v4.500" /></svg>
            <Cross className="mr-[8px] h-[9px] w-[9px]" />
          </div>
          <div className="flex min-h-0 flex-1">
            <div className="flex w-[378px] shrink-0 flex-col overflow-hidden border-r border-white bg-white pt-[2px] pr-px pl-px">
              <FillPanel />
              <ColorPanel />
              <StrokePanel />
            </div>
            <div className="flex-1 pt-[21px] pl-[8px]"><div className="h-[261px] w-[6px] bg-[#858585]" /></div>
          </div>
        </aside>
      </div>
    </div>
  );
}
